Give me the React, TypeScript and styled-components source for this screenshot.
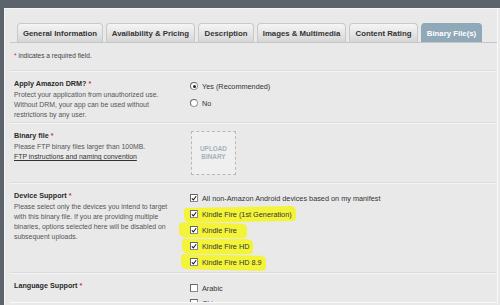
import styled, { createGlobalStyle } from 'styled-components';

const GlobalStyle = createGlobalStyle`
  html, body {
    margin: 0;
    padding: 0;
  }
  body {
    width: 500px;
    height: 305px;
    overflow: hidden;
    background-color: #5d636b;
    font-family: 'Liberation Sans', Arial, sans-serif;
  }
`;

const tabs = [
  { label: 'General Information', width: 86 },
  { label: 'Availability & Pricing', width: 89 },
  { label: 'Description', width: 56 },
  { label: 'Images & Multimedia', width: 89 },
  { label: 'Content Rating', width: 69 },
  { label: 'Binary File(s)', width: 61, active: true },
];

const devices = [
  { label: 'All non-Amazon Android devices based on my manifest' },
  { label: 'Kindle Fire (1st Generation)', mark: { l: -6, r: -4, tilt: -1 } },
  { label: 'Kindle Fire', mark: { l: -11, r: -10, tilt: 1 } },
  { label: 'Kindle Fire HD', mark: { l: -8, r: -4, tilt: 0.5 } },
  { label: 'Kindle Fire HD 8.9', mark: { l: -9, r: -4, tilt: 1 } },
];

function Req() {
  return <Star>*</Star>;
}

function CheckBox({ checked }: { checked?: boolean }) {
  return (
    <Box>
      {checked && (
        <svg width="7" height="7" viewBox="0 0 7 7">
          <path d="M1 3.2 L2.7 5.2 L6 0.8" fill="none" stroke="#111" strokeWidth="1.2" />
        </svg>
      )}
    </Box>
  );
}

function App() {
  return (
    <>
      <GlobalStyle />
      <Frame>
        <Panel>
          <TabStrip>
            {tabs.map((tab) => (
              <Tab key={tab.label} $width={tab.width} $active={tab.active}>
                {tab.label}
              </Tab>
            ))}
          </TabStrip>
          <Note>
            <Req /> indicates a required field.
          </Note>

          <Section $height={52}>
            <div>
              <Label>
                Apply Amazon DRM? <Req />
              </Label>
              <Help>
                Protect your application from unauthorized use.
                <br />
                Without DRM, your app can be used without
                <br />
                restrictions by any user.
              </Help>
            </div>
            <Options $gap={7}>
              <Option>
                <Radio $checked />
                Yes (Recommended)
              </Option>
              <Option>
                <Radio />
                No
              </Option>
            </Options>
          </Section>

          <Section $height={60}>
            <div>
              <Label>
                Binary file <Req />
              </Label>
              <Help>
                Please FTP binary files larger than 100MB.
                <br />
                <HelpLink href="#">FTP instructions and naming convention</HelpLink>
              </Help>
            </div>
            <Upload>
              UPLOAD
              <br />
              BINARY
            </Upload>
          </Section>

          <Section $height={90}>
            <div>
              <Label>
                Device Support <Req />
              </Label>
              <Help>
                Please select only the devices you intend to target
                <br />
                with this binary file. If you are providing multiple
                <br />
                binaries, options selected here will be disabled on
                <br />
                subsequent uploads.
              </Help>
            </div>
            <Options $gap={6}>
              {devices.map((d) => (
                <Option key={d.label}>
                  {d.mark ? (
                    <Mark $l={d.mark.l} $r={d.mark.r} $tilt={d.mark.tilt}>
                      <CheckBox checked />
                      <span>{d.label}</span>
                    </Mark>
                  ) : (
                    <>
                      <CheckBox checked />
                      {d.label}
                    </>
                  )}
                </Option>
              ))}
            </Options>
          </Section>

          <Section $height={40}>
            <div>
              <Label>
                Language Support <Req />
              </Label>
            </div>
            <Options $gap={5}>
              <Option>
                <CheckBox />
                Arabic
              </Option>
              <Option>
                <CheckBox />
                Chinese
              </Option>
            </Options>
          </Section>
        </Panel>
      </Frame>
    </>
  );
}

const Frame = styled.div`
  margin: 8px 0 0 4px;
  height: 297px;
  background-color: #e9e9e9;
  border-top: 1px solid #f6f6f6;
  border-left: 1px solid #f4f4f4;
  box-sizing: border-box;
  overflow: hidden;
`;

const Panel = styled.div`
  margin: 0 2px 0 5px;
  height: 294px;
  box-sizing: border-box;
  padding-top: 14px;
  border-right: 1px solid #fafafa;
  border-bottom: 1px solid #fafafa;
  overflow: hidden;
`;

const TabStrip = styled.div`
  display: flex;
  column-gap: 3px;
  padding-left: 7px;
  height: 19px;
  border-bottom: 1px solid #c4c6c8;
`;

const Tab = styled.div<{ $width: number; $active?: boolean }>`
  width: ${(p) => p.$width}px;
  box-sizing: border-box;
  display: flex;
  align-items: center;
  justify-content: center;
  border: 1px solid ${(p) => (p.$active ? '#8ea8b6' : '#c9c9c9')};
  border-bottom: none;
  border-radius: 4px 4px 0 0;
  background: ${(p) =>
    p.$active ? '#8fa9b8' : 'linear-gradient(#f5f5f5, #d6d6d6)'};
  color: ${(p) => (p.$active ? '#fff' : '#333')};
  font-size: 7.8px;
  font-weight: 700;
  white-space: nowrap;
`;

const Note = styled.div`
  padding: 9px 0 0 4px;
  height: 28px;
  font-size: 6.6px;
  color: #444;
  border-bottom: 1px solid #dcdcdc;
  box-shadow: 0 1px 0 #f3f3f3;
  box-sizing: border-box;
`;

const Star = styled.span`
  color: #d2342f;
`;

const Section = styled.div<{ $height: number }>`
  display: grid;
  grid-template-columns: 176px 1fr;
  height: ${(p) => p.$height}px;
  box-sizing: border-box;
  padding: 8px 0 0 4px;
  border-bottom: 1px solid #dcdcdc;
  box-shadow: 0 1px 0 #f3f3f3;
`;

const Label = styled.div`
  font-size: 7.2px;
  font-weight: 700;
  color: #2a2a2a;
  line-height: 9px;
  margin-bottom: 2px;
`;

const Help = styled.div`
  font-size: 6.9px;
  color: #555;
  line-height: 10px;
`;

const HelpLink = styled.a`
  color: #333;
  text-decoration: underline;
`;

const Options = styled.div<{ $gap: number }>`
  display: flex;
  flex-direction: column;
  row-gap: ${(p) => p.$gap}px;
  padding-top: 2px;
`;

const Option = styled.div`
  display: flex;
  align-items: center;
  column-gap: 4px;
  height: 10px;
  font-size: 7.3px;
  color: #333;
  white-space: nowrap;
`;

const Mark = styled.span<{ $l: number; $r: number; $tilt: number }>`
  position: relative;
  isolation: isolate;
  display: inline-flex;
  align-items: center;
  column-gap: 4px;
  &::before {
    content: '';
    position: absolute;
    z-index: -1;
    top: -3px;
    bottom: -3px;
    left: ${(p) => p.$l}px;
    right: ${(p) => p.$r}px;
    background-color: #f3f33a;
    border-radius: 3px 5px 4px 6px;
    transform: rotate(${(p) => p.$tilt}deg);
  }
`;

const Box = styled.span`
  width: 8px;
  height: 8px;
  box-sizing: border-box;
  display: inline-flex;
  align-items: center;
  justify-content: center;
  background-color: #fff;
  border: 1px solid #8a8a8a;
  border-top-color: #666;
  border-left-color: #666;
  flex-shrink: 0;
`;

const Radio = styled.span<{ $checked?: boolean }>`
  width: 8px;
  height: 8px;
  box-sizing: border-box;
  border-radius: 50%;
  border: 1px solid #9a9a9a;
  border-top-color: #6a6a6a;
  border-left-color: #6a6a6a;
  background: #fff;
  display: inline-flex;
  align-items: center;
  justify-content: center;
  flex-shrink: 0;
  &::after {
    content: '';
    width: 3px;
    height: 3px;
    border-radius: 50%;
    background: ${(p) => (p.$checked ? '#222' : 'transparent')};
  }
`;

const Upload = styled.div`
  width: 45px;
  height: 44px;
  box-sizing: border-box;
  margin-left: 1px;
  display: flex;
  align-items: center;
  justify-content: center;
  text-align: center;
  border: 1px dashed #b9b9b9;
  background-color: #efefef;
  color: #a6b1bc;
  font-size: 6.4px;
  font-weight: 700;
  line-height: 8px;
`;

export default App;
